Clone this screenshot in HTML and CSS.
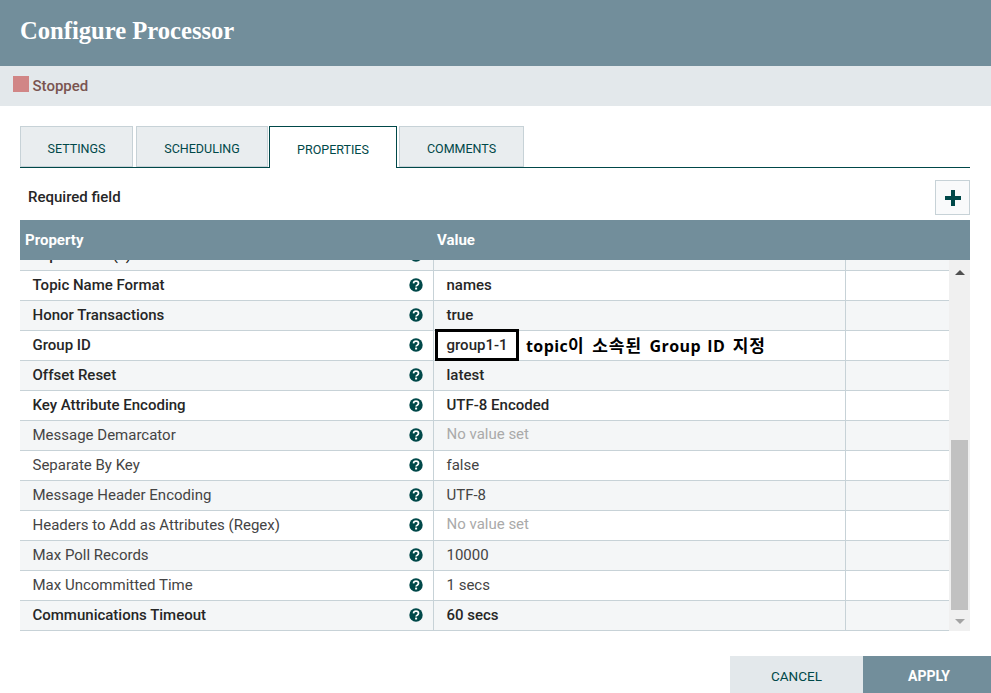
FILE: index.html
```html
<!DOCTYPE html>
<html lang="ko">
<head>
<meta charset="utf-8">
<title>Configure Processor</title>
<link rel="stylesheet" href="styles.css">
</head>
<body>
<svg class="defs" width="0" height="0" aria-hidden="true">
  <symbol id="help" viewBox="0 0 14 14">
    <circle cx="7" cy="7" r="6.7" fill="#004849"/>
    <path d="M4.5 5.4C4.6 4 5.7 3.2 7 3.2c1.4 0 2.5.9 2.5 2.1 0 1-.6 1.5-1.3 1.9-.7.4-1.1.8-1.1 1.4" fill="none" stroke="#fff" stroke-width="1.7"/>
    <rect x="6.1" y="9.6" width="2" height="1.9" fill="#fff"/>
  </symbol>
</svg>
<header class="title-bar"><h1 class="title">Configure Processor</h1></header>
<div class="status-bar"><span class="status-square"></span><span class="status-text">Stopped</span></div>
<main class="content">
  <nav class="tabs">
    <div class="tab tab-settings">SETTINGS</div>
    <div class="tab tab-scheduling">SCHEDULING</div>
    <div class="tab tab-properties active">PROPERTIES</div>
    <div class="tab tab-comments">COMMENTS</div>
  </nav>
  <div class="toolbar">
    <span class="required">Required field</span>
    <button class="add-btn" aria-label="Add property">
      <svg width="16" height="16" viewBox="0 0 16 16"><path d="M6 0h4v6h6v4h-6v6H6v-6H0V6h6z" fill="#004849"/></svg>
    </button>
  </div>
  <div class="table-head"><div class="th th-prop">Property</div><div class="th">Value</div></div>
  <div class="table-wrap">
    <div class="rows">
      <div class="row odd first req"><div class="c-name"><span>Topic Name(s)</span><svg class="help"><use href="#help"/></svg></div><div class="c-val"></div><div class="c-act"></div></div>
      <div class="row req"><div class="c-name"><span>Topic Name Format</span><svg class="help"><use href="#help"/></svg></div><div class="c-val">names</div><div class="c-act"></div></div>
      <div class="row odd req"><div class="c-name"><span>Honor Transactions</span><svg class="help"><use href="#help"/></svg></div><div class="c-val">true</div><div class="c-act"></div></div>
      <div class="row req"><div class="c-name"><span>Group ID</span><svg class="help"><use href="#help"/></svg></div><div class="c-val">group1-1</div><div class="c-act"></div>
        <div class="callout-box"></div><div class="callout-text"><span class="lat">topic</span>이 소속된 <span class="lat">Group ID</span> 지정</div></div>
      <div class="row odd req"><div class="c-name"><span>Offset Reset</span><svg class="help"><use href="#help"/></svg></div><div class="c-val">latest</div><div class="c-act"></div></div>
      <div class="row req"><div class="c-name"><span>Key Attribute Encoding</span><svg class="help"><use href="#help"/></svg></div><div class="c-val">UTF-8 Encoded</div><div class="c-act"></div></div>
      <div class="row odd"><div class="c-name"><span>Message Demarcator</span><svg class="help"><use href="#help"/></svg></div><div class="c-val unset">No value set</div><div class="c-act"></div></div>
      <div class="row"><div class="c-name"><span>Separate By Key</span><svg class="help"><use href="#help"/></svg></div><div class="c-val">false</div><div class="c-act"></div></div>
      <div class="row odd"><div class="c-name"><span>Message Header Encoding</span><svg class="help"><use href="#help"/></svg></div><div class="c-val">UTF-8</div><div class="c-act"></div></div>
      <div class="row"><div class="c-name"><span>Headers to Add as Attributes (Regex)</span><svg class="help"><use href="#help"/></svg></div><div class="c-val unset">No value set</div><div class="c-act"></div></div>
      <div class="row odd"><div class="c-name"><span>Max Poll Records</span><svg class="help"><use href="#help"/></svg></div><div class="c-val">10000</div><div class="c-act"></div></div>
      <div class="row"><div class="c-name"><span>Max Uncommitted Time</span><svg class="help"><use href="#help"/></svg></div><div class="c-val">1 secs</div><div class="c-act"></div></div>
      <div class="row odd req"><div class="c-name"><span>Communications Timeout</span><svg class="help"><use href="#help"/></svg></div><div class="c-val">60 secs</div><div class="c-act"></div></div>
    </div>
    <div class="scrollbar">
      <div class="arrow arrow-up"></div>
      <div class="track"><div class="thumb"></div></div>
      <div class="arrow arrow-down"></div>
    </div>
  </div>
</main>
<footer class="footer">
  <button class="btn btn-cancel">CANCEL</button>
  <button class="btn btn-apply">APPLY</button>
</footer>
</body>
</html>
```

FILE: styles.css
```css
* { box-sizing: border-box; }
html, body { margin: 0; padding: 0; }
body {
  width: 991px;
  height: 693px;
  overflow: hidden;
  background: #fff;
  font-family: Roboto, "Noto Sans CJK KR", sans-serif;
  font-size: 15px;
  color: #262626;
}
.defs { position: absolute; }
.title-bar {
  height: 66px;
  background: #728e9b;
  padding: 0 20px 4px;
  display: flex;
  align-items: center;
}
.title {
  margin: 0;
  font-family: "Liberation Serif", serif;
  font-size: 24.6px;
  font-weight: 700;
  color: #fff;
}
.status-bar {
  height: 40px;
  background: #e3e8eb;
  display: flex;
  align-items: flex-start;
  padding: 10px 0 0 13px;
}
.status-square { width: 16px; height: 16px; background: #d18686; }
.status-text {
  margin-left: 3.5px;
  margin-top: 1px;
  font-weight: 500;
  font-size: 15px;
  line-height: 18px;
  color: #7a5450;
}
.content { padding: 20px 21px 0 20px; }
.tabs {
  display: flex;
  height: 42px;
  border-bottom: 1px solid #004849;
}
.tab {
  height: 41px;
  background: #e9edef;
  border: 1px solid #c7d2d7;
  color: #004849;
  font-size: 12.5px;
  display: flex;
  align-items: center;
  justify-content: center;
  padding-top: 4px;
}
.tab-settings { width: 113px; margin-right: 3px; }
.tab-scheduling { width: 132px; margin-right: 1px; }
.tab-properties { width: 128px; margin-right: 2px; }
.tab-comments { width: 125px; }
.tab.active {
  height: 42px;
  background: #fff;
  border: 1px solid #004849;
  border-bottom: 0;
  padding-top: 3px;
}
.toolbar {
  height: 52px;
  display: flex;
  align-items: flex-start;
  justify-content: space-between;
}
.required {
  margin: 20px 0 0 8px;
  line-height: 18px;
  font-weight: 500;
  color: #262626;
}
.add-btn {
  margin-top: 12px;
  width: 35px;
  height: 35px;
  padding: 0;
  background: #f9fafb;
  border: 1px solid #c7d2d7;
  display: flex;
  align-items: center;
  justify-content: center;
}
.table-head {
  height: 40px;
  background: #728e9b;
  display: flex;
  align-items: center;
  color: #fff;
  font-weight: 700;
}
.th { padding-left: 5px; }
.th-prop { width: 412px; }
.table-wrap {
  display: flex;
  height: 371px;
  overflow: hidden;
}
.rows { width: 929px; overflow: hidden; }
.row {
  position: relative;
  display: flex;
  height: 30px;
  border-bottom: 1px solid #c7d2d7;
  background: #fff;
  color: #444;
}
.row.odd { background: #f4f6f7; }
.row.first { margin-top: -19px; }
.row.req { font-weight: 500; color: #262626; }
.row > div { line-height: 29px; }
.c-name {
  width: 414px;
  flex: none;
  border-right: 1px solid #c7d2d7;
  padding: 0 10px 0 12.5px;
  display: flex;
  align-items: center;
  justify-content: space-between;
}
.c-val {
  width: 412px;
  flex: none;
  border-right: 1px solid #c7d2d7;
  padding-left: 12.5px;
}
.c-act { flex: 1; }
.help { width: 14px; height: 14px; flex: none; margin-top: -1px; }
.row > .unset { color: #aaa; font-weight: 400; line-height: 27px; }
.callout-box {
  position: absolute;
  left: 415px;
  top: -2px;
  width: 84px;
  height: 32px;
  border: 3px solid #000;
}
.row > .callout-text {
  position: absolute;
  left: 506px;
  top: -1px;
  font-family: "Noto Sans CJK KR", sans-serif;
  font-size: 17px;
  letter-spacing: 1px;
  word-spacing: 1.7px;
  font-weight: 700;
  color: #000;
  white-space: nowrap;
}
.lat {
  font-family: "Open Sans", sans-serif;
  font-size: 16px;
  letter-spacing: 0.4px;
}
.scrollbar {
  width: 21px;
  background: #f0f0f0;
  display: flex;
  flex-direction: column;
  align-items: center;
}
.arrow { height: 20px; flex: none; display: flex; align-items: center; justify-content: center; }
.arrow::before { content: ""; border-left: 5px solid transparent; border-right: 5px solid transparent; }
.arrow-up::before { border-bottom: 5px solid #505050; margin-top: 5px; }
.arrow-down::before { border-top: 5px solid #a3a3a3; }
.track { flex: 1; width: 100%; padding: 160px 2px 0; }
.thumb { height: 170px; background: #c1c1c1; }
.footer {
  display: flex;
  justify-content: flex-end;
  margin-top: 25px;
}
.btn {
  height: 37px;
  border: 0;
  padding: 2px 0 0;
  font-family: Roboto, sans-serif;
  font-size: 13.5px;
}
.btn-cancel { width: 133px; background: #e3e8eb; color: #004849; font-weight: 400; }
.btn-apply { width: 128px; background: #728e9b; color: #fff; font-weight: 700; font-size: 14px; padding-left: 4px; }
```
